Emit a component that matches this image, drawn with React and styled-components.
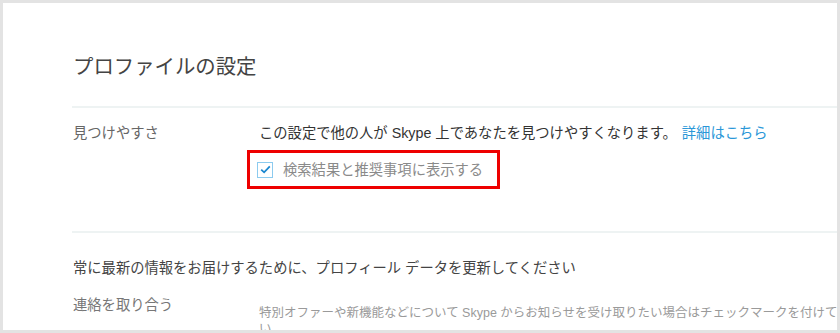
import React from "react";
import styled, { createGlobalStyle } from "styled-components";

const Global = createGlobalStyle`
  html, body { margin: 0; padding: 0; background: #ffffff; }
  body { font-family: "Liberation Sans", "Noto Sans CJK JP", sans-serif; }
  * { box-sizing: border-box; }
`;

const Frame = styled.div`
  width: 840px;
  height: 333px;
  border: 3px solid #e3e3e3;
  background: #ffffff;
  overflow: hidden;
`;

const Page = styled.div`
  padding: 50px 0 0 69px;
`;

const Title = styled.h1`
  margin: 0;
  font-size: 20.4px;
  line-height: 28px;
  font-weight: 400;
  color: #444444;
  padding-left: 1px;
`;

const Divider = styled.div`
  height: 2px;
  background: #eef3f3;
  margin-top: ${(p) => p.$top}px;
`;

const Row = styled.div`
  display: grid;
  grid-template-columns: 186px 1fr;
  margin-top: ${(p) => p.$top}px;
  padding-left: 1px;
`;

const Label = styled.div`
  font-size: 14.3px;
  line-height: 20px;
  color: ${(p) => p.$color || "#666666"};
`;

const Content = styled.div`
  display: flex;
  flex-direction: column;
  align-items: flex-start;
`;

const Description = styled.p`
  margin: 0;
  font-size: 14.3px;
  line-height: 20px;
  color: #333333;
  white-space: nowrap;
`;

const Link = styled.a`
  color: #2a97d8;
  text-decoration: none;
  margin-left: 5px;
`;

const Highlight = styled.div`
  margin: 7px 0 0 -12px;
  border: 3px solid #ee0000;
  height: 39px;
  display: flex;
  align-items: center;
  padding: 0 14px 0 7px;
  gap: 10px;
`;

const CheckBox = styled.span`
  width: 16px;
  height: 16px;
  border: 1px solid #8ccbef;
  background: #ffffff;
  display: flex;
  align-items: center;
  justify-content: center;
`;

const CheckLabel = styled.span`
  font-size: 14.3px;
  line-height: 20px;
  color: #8a8a8a;
  white-space: nowrap;
`;

const Heading = styled.h2`
  margin: 25px 0 0;
  padding-left: 1px;
  font-size: 14.3px;
  line-height: 20px;
  font-weight: 400;
  color: #444444;
  white-space: nowrap;
`;

const Note = styled.p`
  margin: 10px 0 0;
  width: 622px;
  font-size: 12.5px;
  line-height: 16px;
  color: #9a9a9a;
`;

export default function App() {
  return (
    <>
      <Global />
      <Frame>
        <Page>
          <Title>プロファイルの設定</Title>
          <Divider $top={25} />
          <Row $top={15}>
            <Label>見つけやすさ</Label>
            <Content>
              <Description>
                この設定で他の人が Skype 上であなたを見つけやすくなります。
                <Link href="#">詳細はこちら</Link>
              </Description>
              <Highlight>
                <CheckBox>
                  <svg width="11" height="9" viewBox="0 0 11 9">
                    <path d="M1.2 4.6 L4.1 7.3 L9.8 1.4" fill="none" stroke="#1a86cf" strokeWidth="1.8" />
                  </svg>
                </CheckBox>
                <CheckLabel>検索結果と推奨事項に表示する</CheckLabel>
              </Highlight>
            </Content>
          </Row>
          <Divider $top={42} />
          <Heading>常に最新の情報をお届けするために、プロフィール データを更新してください</Heading>
          <Row $top={17}>
            <Label $color="#777777">連絡を取り合う</Label>
            <Content>
              <Note>
                特別オファーや新機能などについて Skype からお知らせを受け取りたい場合はチェックマークを付けてください。
              </Note>
            </Content>
          </Row>
        </Page>
      </Frame>
    </>
  );
}
